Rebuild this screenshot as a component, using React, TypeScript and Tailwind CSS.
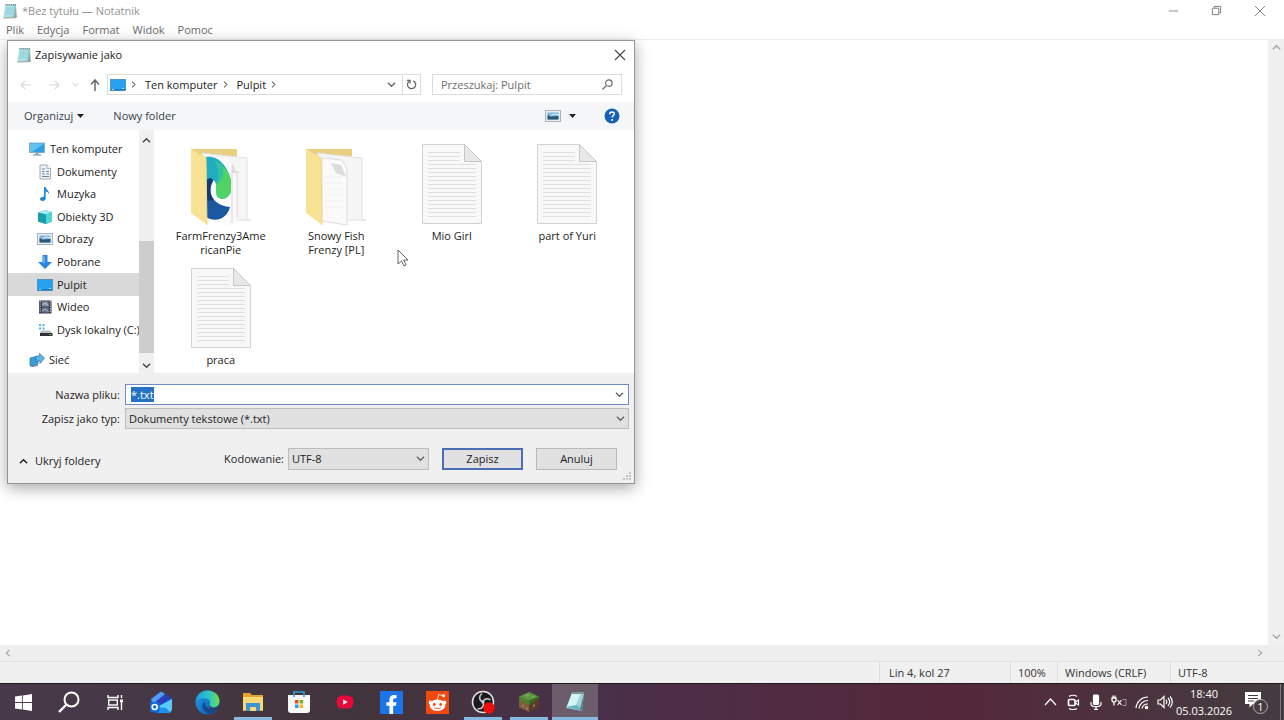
import { useEffect, useRef } from "react";
import type { ReactNode } from "react";
import clsx from "clsx";
import { FaFacebookF, FaRedditAlien } from "react-icons/fa";

function Chevron({ dir, className, size = 9 }: { dir: "up" | "down" | "left" | "right"; className?: string; size?: number }) {
  const d = {
    up: "M1 7 5 3l4 4",
    down: "M1 3l4 4 4-4",
    left: "M7 1 3 5l4 4",
    right: "M3 1l4 4-4 4",
  }[dir];
  return (
    <svg viewBox="0 0 10 10" width={size} height={size} className={clsx("shrink-0", className)} fill="none" stroke="currentColor" strokeWidth="1.5" aria-hidden="true">
      <path d={d} />
    </svg>
  );
}

function NotepadIcon({ size = 16 }: { size?: number }) {
  return (
    <svg viewBox="0 0 16 16" width={size} height={size} className="shrink-0" aria-hidden="true">
      <path d="M3.500 1.500H14L13 14l-11.500.5z" fill="#8fcdd4" />
      <path d="M3.500 2.500H12l-1 11-9 .5z" fill="#b3e3e8" />
      <path d="M12 13.500 14 2l.8 12-1.800 1z" fill="#98a5a8" />
      <path d="M4 5h7.500M3.700 7h7.500M3.500 9H11M3.200 11h7.500" stroke="#79bfca" strokeWidth=".7" />
      <path d="M3.500 1.700h11" stroke="#6b8a8f" strokeWidth="1.400" strokeDasharray="1 .9" />
      <path d="M1.500 15l10.500-.3L14.500 14" stroke="#747f81" fill="none" strokeWidth=".8" />
    </svg>
  );
}

function MonitorIcon() {
  return (
    <svg viewBox="0 0 16 16" width="16" height="16" aria-hidden="true">
      <rect x=".5" y="2" width="15" height="9.500" fill="#2f9fe0" stroke="#7ba7bd" strokeWidth=".8" />
      <path d="M1 2.500h14L3 11H1z" fill="#62c1f0" />
      <path d="M6.500 12h3v1.500h-3z" fill="#8aa5b3" />
      <path d="M4 14h8" stroke="#6f9db5" strokeWidth="1.200" />
    </svg>
  );
}

function DesktopIcon() {
  return (
    <svg viewBox="0 0 16 14" width="16" height="14" aria-hidden="true">
      <rect x=".5" y="1.500" width="15" height="11" fill="#27a0ee" stroke="#3a8cc8" strokeWidth=".8" />
      <path d="M1 11.800h14" stroke="#1d6dab" strokeWidth="1" />
      <path d="M2 11.500h2M12 10.500h2" stroke="#b6e2ff" strokeWidth=".9" />
    </svg>
  );
}

function PictureIcon() {
  return (
    <svg viewBox="0 0 16 14" width="16" height="14" aria-hidden="true">
      <rect x=".5" y="1.500" width="15" height="11" fill="#e9edf0" stroke="#a3adb6" strokeWidth=".9" />
      <rect x="2.500" y="3.500" width="11" height="7" fill="#80b8dd" />
      <path d="M2.500 10.500V6l3 1.500 8-.5v3.500z" fill="#2b5876" />
      <path d="M6 6.500l4-1.500 3.500 1" stroke="#e6f5ff" fill="none" />
    </svg>
  );
}

const PLACE_ICONS: Record<string, ReactNode> = {
  docs: (
    <svg viewBox="0 0 16 16" width="16" height="16" aria-hidden="true">
      <path d="M3 1h7l3.500 3.500V15H3z" fill="#eef3f8" stroke="#93a2b2" strokeWidth=".9" />
      <path d="M10 1v3.500h3.500" fill="#fff" stroke="#93a2b2" strokeWidth=".8" />
      <path d="M5 5h3M5 7.500h2.500M9 7.500h3M5 10h3M9.500 10H12M5 12.500h7" stroke="#6682a4" />
    </svg>
  ),
  music: (
    <svg viewBox="0 0 16 16" width="16" height="16" aria-hidden="true">
      <path d="M7 1h1.700c.3 2.600 3.800 3.500 3.300 7.300-.6-1.800-1.700-2.500-3.300-2.800V12c0 1.800-1.300 3-3 3S3 14.200 3 13s1.300-2.300 4-2.200z" fill="#1e88d8" />
    </svg>
  ),
  cube: (
    <svg viewBox="0 0 16 16" width="16" height="16" aria-hidden="true">
      <path d="M1 3.500 8.500 1 15 3v9.500L9 15 1 12.500z" fill="#2fb9c4" />
      <path d="M1 3.500 8.500 1 15 3 9 5.500z" fill="#a5ecee" />
      <path d="M9 5.500 15 3v9.500L9 15z" fill="#4fd6d2" />
      <path d="M1 3.500l8 2V15l-8-2.500z" fill="#1a9cad" />
    </svg>
  ),
  download: (
    <svg viewBox="0 0 16 16" width="16" height="16" aria-hidden="true">
      <path d="M5.500 1h5v7H15l-7 7-7-7h4.500z" fill="#2a86dc" />
      <path d="M6.500 2h1.500v7H5z" fill="#5faef0" />
    </svg>
  ),
  video: (
    <svg viewBox="0 0 16 16" width="16" height="16" aria-hidden="true">
      <rect x="2" y="1.500" width="12.500" height="13" fill="#3b3f4d" />
      <path d="M3.200 2v12M13.300 2v12" stroke="#c5c9d2" strokeWidth="1.200" strokeDasharray="1.200 1.200" />
      <rect x="5" y="2.500" width="6.500" height="5" fill="#7d8cb5" />
      <rect x="5" y="8.500" width="6.500" height="5" fill="#5f719f" />
      <path d="M5 6l3-2 3.500 2.500M5 12l3-2 3.500 2.500" stroke="#d6c98a" fill="none" strokeWidth=".9" />
    </svg>
  ),
  disk: (
    <svg viewBox="0 0 16 16" width="16" height="16" aria-hidden="true">
      <path d="M2 2h2v2H2zM5.500 2h2v2h-2zM2 5.500h2v2H2zM5.500 5.500h2v2h-2z" fill="#4bb4ea" />
      <path d="M4 8.500h9l2 2.500H3z" fill="#b9bfc2" />
      <path d="M3 11h12.500v3H3z" fill="#2f3335" />
      <path d="M12.500 12.500h1.500" stroke="#69e06a" />
    </svg>
  ),
  network: (
    <svg viewBox="0 0 16 16" width="16" height="16" aria-hidden="true">
      <path d="M1 6l8-2v8l-7 2.500-1-1z" fill="#3d9bd6" stroke="#2b78ae" strokeWidth=".7" />
      <path d="M7 4.500 10.500 4V1.500L15.500 6 11 11.500V9L7 9.500z" fill="#5db5e8" stroke="#2b78ae" strokeWidth=".7" />
      <path d="M3 14.500l6-1" stroke="#5f7c8d" />
    </svg>
  ),
};

const PLACES: { label: string; icon: ReactNode; root?: boolean; selected?: boolean }[] = [
  { label: "Ten komputer", icon: <MonitorIcon />, root: true },
  { label: "Dokumenty", icon: PLACE_ICONS.docs },
  { label: "Muzyka", icon: PLACE_ICONS.music },
  { label: "Obiekty 3D", icon: PLACE_ICONS.cube },
  { label: "Obrazy", icon: <PictureIcon /> },
  { label: "Pobrane", icon: PLACE_ICONS.download },
  { label: "Pulpit", icon: <DesktopIcon />, selected: true },
  { label: "Wideo", icon: PLACE_ICONS.video },
  { label: "Dysk lokalny (C:)", icon: PLACE_ICONS.disk },
];

function TextFileIcon() {
  return (
    <svg viewBox="0 0 62 82" width="62" height="82" aria-hidden="true">
      <path d="M1.500 1.500h42l17 17v62h-59z" fill="#f8f8f8" stroke="#d2d2d2" />
      <path d="M43.500 1.500v17h17z" fill="#e8e8e8" stroke="#c6c6c6" />
      <path d="M7 9.500h32M7 13.500h32M7 17.500h32M7 21.500h48M7 25.500h48M7 29.500h48M7 33.500h48M7 37.500h48M7 41.500h48M7 45.500h48M7 49.500h48M7 53.500h48M7 57.500h48M7 61.500h48M7 65.500h48M7 69.500h48M7 73.500h48" stroke="#e0e0e0" />
    </svg>
  );
}

function FolderIcon({ edge = false }: { edge?: boolean }) {
  return (
    <svg viewBox="0 0 62 82" width="62" height="82" aria-hidden="true">
      <path d="M1 6h46v10L16 20z" fill="#e8d080" />
      <path d="M12 10l45 5v62H20z" fill="#f5f5f5" stroke="#e0e0e0" />
      <path d="M57 77h4" stroke="#d0d0d0" />
      {edge ? (
        <>
          <path d="M16 13l22 3 9 14v50l-5 3-26-6z" fill="#fafafa" />
          <path d="M42 20l5 10h-5z" fill="#e0e0e0" />
          <path d="M42 29h7M42 22v58M47 30v44" stroke="#dcd2d4" fill="none" />
          <path d="M16 14c12-2 22 9 25 24v10c-2 8-10 10-14 5-1-3 0-7-1-12-2-6-7-5-10-1z" fill="#20adc0" />
          <path d="M24 17c9 3 16 12 17 22v9c-2 8-10 10-14 5-1-3 0-7-1-12 4-7 3-16-2-24z" fill="#33c3a2" />
          <path d="M33 24c5 4 8 10 8 16v8c-2 8-10 10-14 5-1-3 0-7-1-12 6-2 9-9 7-17z" fill="#4fd463" />
          <path d="M16 38c3-4 7-3 7 0-6 10-2 24 17 26-3 12-15 16-24 10z" fill="#1c58a0" />
          <path d="M16 38c3-4 7-3 7 0-4 7-3 14 1 19l-8 1z" fill="#123c78" />
        </>
      ) : (
        <>
          <path d="M17 15l20 2 5 9v56l-25-4z" fill="#fafafa" stroke="#dddddd" />
          <path d="M26 20l10 2 5 12-10-4z" fill="#dcdcdc" />
          <path d="M20 34h17M20 40h18M20 46h18M20 52h18M20 58h18M20 64h18" stroke="#f0f0f0" />
        </>
      )}
      <path d="M1 6l15 9 1 67L1 70z" fill="#f8e294" />
      <path d="M1 6l15 9 1 67" fill="none" stroke="#efd88a" />
    </svg>
  );
}

const FILES = [
  { name: ["FarmFrenzy3Ame", "ricanPie"], icon: <FolderIcon edge /> },
  { name: ["Snowy Fish", "Frenzy [PL]"], icon: <FolderIcon /> },
  { name: ["Mio Girl"], icon: <TextFileIcon /> },
  { name: ["part of Yuri"], icon: <TextFileIcon /> },
  { name: ["praca"], icon: <TextFileIcon /> },
];

function Caret() {
  return (
    <svg viewBox="0 0 7 4" width="7" height="4" aria-hidden="true">
      <path d="M0 0h7L3.500 4z" fill="#222" />
    </svg>
  );
}

function AddressRow() {
  return (
    <div className="flex h-[21px] items-center px-3 text-[#222]">
      <button aria-label="Wstecz" className="w-3 text-[#d8d8d8]">
        <svg viewBox="0 0 12 12" width="12" height="12" fill="none" stroke="currentColor" strokeWidth="1.200"><path d="M11 6H1M5 2 1 6l4 4" /></svg>
      </button>
      <button aria-label="Dalej" className="ml-4 w-3 text-[#d8d8d8]">
        <svg viewBox="0 0 12 12" width="12" height="12" fill="none" stroke="currentColor" strokeWidth="1.200"><path d="M1 6h10M7 2l4 4-4 4" /></svg>
      </button>
      <button aria-label="Ostatnie" className="ml-3 text-[#dcdcdc]"><Chevron dir="down" size={7} /></button>
      <button aria-label="W górę" className="ml-2.5 w-3">
        <svg viewBox="0 0 12 12" width="12" height="12" fill="none" stroke="#666" strokeWidth="1.500"><path d="M6 12V1M2 5.500 6 1l4 4.500" /></svg>
      </button>
      <div className="ml-1.5 flex h-full flex-1 items-center border border-[#dcdcdc] pl-[2px]">
        <DesktopIcon />
        <Chevron dir="right" size={7} className="ml-1 text-[#666]" />
        <button className="ml-2">Ten komputer</button>
        <Chevron dir="right" size={7} className="ml-1 text-[#666]" />
        <button className="ml-2">Pulpit</button>
        <Chevron dir="right" size={7} className="ml-1 text-[#666]" />
        <button aria-label="Poprzednie lokalizacje" className="ml-auto pr-1.5 text-[#666]"><Chevron dir="down" /></button>
        <button aria-label="Odśwież" className="flex h-full w-[18px] items-center justify-center border-l border-[#dcdcdc]">
          <svg viewBox="0 0 12 12" width="11" height="11" fill="none" stroke="#666" strokeWidth="1.400"><path d="M8 2A4.500 4.500 0 1 1 3.500 2.400M4.500 5V1.500H1" /></svg>
        </button>
      </div>
      <label className="ml-[11px] flex h-full w-[190px] items-center border border-[#dcdcdc] px-2">
        <input type="search" aria-label="Przeszukaj: Pulpit" placeholder="Przeszukaj: Pulpit" className="min-w-0 flex-1 outline-none placeholder:text-[#6d6d6d]" />
        <svg viewBox="0 0 12 12" width="11" height="11" fill="none" stroke="#666" strokeWidth="1.300"><circle cx="7.500" cy="4.500" r="3.500" /><path d="M5 7 .5 11.500" /></svg>
      </label>
    </div>
  );
}

function SaveDialog() {
  const nameRef = useRef<HTMLInputElement>(null);

  useEffect(() => {
    nameRef.current?.focus();
    nameRef.current?.select();
  }, []);

  return (
    <div role="dialog" aria-label="Zapisywanie jako" className="absolute top-10 left-[7px] flex w-[628px] max-w-full flex-col border border-[#959595] bg-white text-[#1c1c1c] shadow-[0_4px_14px_rgba(0,0,0,0.35)]">
      <div className="flex h-7 items-center px-2">
        <NotepadIcon />
        <span className="ml-[3px] flex-1">Zapisywanie jako</span>
        <button aria-label="Zamknij">
          <svg viewBox="0 0 12 12" width="12" height="12" stroke="#444" strokeWidth="1.100"><path d="M1 1l10 10M11 1 1 11" /></svg>
        </button>
      </div>
      <div className="pt-[5px] pb-[7px]"><AddressRow /></div>

      <div className="flex h-7 items-center bg-[#f5f6f7] pr-3.5 pl-4 text-[#35424f]">
        <button className="flex items-center gap-1">Organizuj <Caret /></button>
        <button className="ml-[29px]">Nowy folder</button>
        <button aria-label="Widok" className="ml-auto flex items-center gap-2"><PictureIcon /><Caret /></button>
        <button aria-label="Pomoc" className="ml-7">
          <svg viewBox="0 0 16 16" width="16" height="16">
            <circle cx="8" cy="8" r="7.500" fill="#1261b5" />
            <path d="M5.700 6.200C5.800 3 10.500 3.300 10.300 6c-.1 1.500-2.200 1.700-2.200 3.500" fill="none" stroke="#fff" strokeWidth="1.500" />
            <circle cx="8.100" cy="12" r="1" fill="#fff" />
          </svg>
        </button>
      </div>

      <div className="flex h-[243px]">
        <nav className="w-[131px] overflow-hidden pt-2">
          <ul className="mr-px grid h-[203px] auto-rows-fr">
            {PLACES.map((p) => (
              <li key={p.label} className={clsx("flex", p.selected && "bg-[#d9d9d9]")}>
                <button className={clsx("flex items-center whitespace-nowrap", p.root ? "gap-[5px] pl-[21px]" : "gap-1 pl-[29px]")}>
                  {p.icon}
                  {p.label}
                </button>
              </li>
            ))}
          </ul>
          <button className="mt-2 flex h-[22px] items-center gap-1 pl-[21px]">{PLACE_ICONS.network}Sieć</button>
        </nav>
        <div className="flex w-[15px] flex-col items-center bg-[#f0f0f0] text-[#444]">
          <button aria-label="Przewiń w górę" className="flex h-5 items-center"><Chevron dir="up" /></button>
          <div className="flex-90" />
          <div className="w-full flex-111 bg-[#cdcdcd]" />
          <button aria-label="Przewiń w dół" className="flex h-5 items-center pt-1"><Chevron dir="down" /></button>
        </div>
        <ul className="grid flex-1 grid-cols-4 content-start gap-y-[10px] px-[9px] pt-[13px] text-center leading-[14px]">
          {FILES.map((f) => (
            <li key={f.name[0]} className="flex flex-col items-center">
              {f.icon}
              <span className="mt-1">
                {f.name.map((line) => (
                  <span key={line} className="block">{line}</span>
                ))}
              </span>
            </li>
          ))}
        </ul>
      </div>

      <div className="bg-[#f0f0f0] pt-[11px] pb-[13px]">
        <div className="grid grid-cols-[112px_1fr] items-center gap-x-[5px] gap-y-[3px] pr-[5px]">
          <label htmlFor="file-name" className="text-right">Nazwa pliku:</label>
          <div className="flex h-[21px] items-center border border-[#6d8cc4] bg-white pr-1 pl-[5px]">
            <input id="file-name" ref={nameRef} defaultValue="*.txt" className="h-[15px] min-w-0 flex-1 outline-none selection:bg-[#2372c4] selection:text-white" />
            <button aria-label="Pokaż listę" className="text-[#666]"><Chevron dir="down" /></button>
          </div>
          <label htmlFor="file-type" className="text-right">Zapisz jako typ:</label>
          <div className="relative text-[#666]">
            <select id="file-type" className="block h-[21px] w-full appearance-none border border-[#bdbdbd] bg-[#e1e1e1] pl-[3px] text-[#1c1c1c]">
              <option>Dokumenty tekstowe (*.txt)</option>
            </select>
            <Chevron dir="down" className="pointer-events-none absolute top-1.5 right-1" />
          </div>
        </div>
        <div className="mt-[19px] flex items-center pr-[17px]">
          <button className="mt-1 flex items-center gap-[7px] pl-[11px]"><Chevron dir="up" />Ukryj foldery</button>
          <label htmlFor="encoding" className="ml-auto">Kodowanie:</label>
          <div className="relative ml-1 text-[#666]">
            <select id="encoding" className="block h-[22px] w-[141px] appearance-none border border-[#bdbdbd] bg-[#e1e1e1] pl-[3px] text-[#1c1c1c]">
              <option>UTF-8</option>
            </select>
            <Chevron dir="down" className="pointer-events-none absolute top-1.5 right-1" />
          </div>
          <button className="ml-[13px] h-[22px] w-[81px] border-2 border-[#4a6db5] bg-[#e1e1e1] leading-[14px]">Zapisz</button>
          <button className="ml-[13px] h-[22px] w-[81px] border border-[#b8b8b8] bg-[#e1e1e1]">Anuluj</button>
        </div>
      </div>
      <svg viewBox="0 0 9 9" width="9" height="9" className="absolute right-0.5 bottom-0.5" fill="#c4c4c4" aria-hidden="true">
        <path d="M6 0h2v2H6zM6 3h2v2H6zM6 6h2v2H6zM3 3h2v2H3zM3 6h2v2H3zM0 6h2v2H0z" />
      </svg>
    </div>
  );
}

const APPS: { name: string; icon: ReactNode; running?: boolean; active?: boolean }[] = [
  {
    name: "Start",
    icon: (
      <svg viewBox="0 0 16 16" width="17" height="17" fill="#fff"><path d="M0 2.300 6.500 1.400v6.200H0zM7.300 1.300 16 0v7.600H7.300zM0 8.400h6.500v6.200L0 13.700zM7.300 8.400H16V16l-8.700-1.300z" /></svg>
    ),
  },
  {
    name: "Wyszukaj",
    icon: (
      <svg viewBox="0 0 22 22" width="22" height="22" fill="none" stroke="#fff" strokeWidth="2"><circle cx="13.500" cy="8.500" r="7" /><path d="M8.500 13.500 1 21" strokeWidth="2.400" /></svg>
    ),
  },
  {
    name: "Widok zadań",
    icon: (
      <svg viewBox="0 0 17 17" width="17" height="17" fill="none" stroke="#fff" strokeWidth="1.400"><path d="M1 1v2.500h10V1M1 16v-2.500h10V16M14.500 1v3M14.500 8.500V16" /><rect x="1.700" y="6" width="8.600" height="5" /><path d="M13 5.500h3v3h-3z" fill="#fff" stroke="none" /></svg>
    ),
  },
  {
    name: "Outlook",
    icon: (
      <svg viewBox="0 0 24 24" width="24" height="24">
        <path d="M2 9 12 1.500 23 9v11l-2 3H5l-3-3z" fill="#1f4fd0" />
        <path d="M2 9 12 1.500l4 2.500L4 14z" fill="#4f9cf5" />
        <path d="M4 14 17 4l5 4-14 9z" fill="#2a3fb5" />
        <path d="M9 23 8 17 23 9v11l-2.500 3z" fill="#58cbf8" />
        <path d="M8 17l9 1 5 5H9z" fill="#1f90f0" />
        <rect x="1" y="12" width="9.500" height="10" rx="1.500" fill="#1268d4" />
        <circle cx="5.700" cy="17" r="2.500" fill="none" stroke="#fff" strokeWidth="1.600" />
      </svg>
    ),
  },
  {
    name: "Microsoft Edge",
    icon: (
      <svg viewBox="0 0 24 24" width="25" height="25">
        <defs>
          <linearGradient id="edge-top" x1="0" x2="1"><stop offset="0" stopColor="#1d9fe0" /><stop offset=".6" stopColor="#32c8c0" /><stop offset="1" stopColor="#6be04c" /></linearGradient>
          <linearGradient id="edge-low" x1="0" x2="1" y1="0" y2="1"><stop offset="0" stopColor="#1b9be4" /><stop offset="1" stopColor="#1359a8" /></linearGradient>
        </defs>
        <circle cx="12" cy="12" r="11.500" fill="url(#edge-low)" />
        <path d="M.6 11C1.500 4.500 6 .5 12 .5c7 0 11.500 5 11.500 10 0 4-3 6-6.500 6-2.500 0-3.500-1-3-2 1-1.500 1-6-4-6.500C5.500 7.500 1.500 9 .6 11z" fill="url(#edge-top)" />
        <path d="M9 11c-4 4-1 11 6 12 3-.5 6-3 7-5.500-4 2-12 1-12.500-4.500z" fill="#14488c" />
        <path d="M14 14.500c.8 2.300 3.500 3.200 6 2.700 1-.3 2-.7 3.500-2V18h-2c-4 1.500-9 .5-7.500-3.500z" fill="#43333f" />
      </svg>
    ),
  },
  {
    name: "Eksplorator plików",
    running: true,
    icon: (
      <svg viewBox="0 0 22 20" width="22" height="20">
        <path d="M1 1h7l2 2h11v4H1z" fill="#e3a52c" />
        <path d="M1 5h20v14H1z" fill="#f8d775" />
        <path d="M4 11h14v8h-4v-4H8v4H4z" fill="#3c93d8" />
        <path d="M1 18h3v1H1zM18 18h3v1h-3z" fill="#e0ae3c" />
      </svg>
    ),
  },
  {
    name: "Microsoft Store",
    icon: (
      <svg viewBox="0 0 24 24" width="24" height="24">
        <path d="M7 6V2h10v4" fill="none" stroke="#2c9fd8" strokeWidth="1.600" />
        <path d="M1 5h22v15a3 3 0 0 1-3 3H4a3 3 0 0 1-3-3z" fill="#f8f8f8" />
        <path d="M7 5v2M17 5v2" stroke="#2c9fd8" strokeWidth="1.600" />
        <path d="M8 10h3.500v3.500H8z" fill="#ee5022" /><path d="M12.600 10h3.500v3.500h-3.500z" fill="#7cb518" />
        <path d="M8 14.500h3.500V18H8z" fill="#20a3ea" /><path d="M12.600 14.500h3.500V18h-3.500z" fill="#fab414" />
      </svg>
    ),
  },
  {
    name: "YouTube",
    icon: (
      <svg viewBox="0 0 20 16" width="18" height="14"><rect x=".5" y=".5" width="19" height="15" rx="6" fill="#e60a3a" /><path d="M8 5l5 3-5 3z" fill="#fff" /></svg>
    ),
  },
  { name: "Facebook", icon: <span className="flex size-[23px] items-end justify-center bg-[#1b74e8] text-white"><FaFacebookF size={19} /></span> },
  { name: "Reddit", icon: <span className="flex size-[23px] items-center justify-center bg-[#f04a12] text-white"><FaRedditAlien size={19} /></span> },
  {
    name: "OBS Studio",
    running: true,
    icon: (
      <svg viewBox="0 0 24 24" width="24" height="24">
        <circle cx="12" cy="12" r="10.500" fill="#1b1b1e" stroke="#e4e4e4" strokeWidth="1.500" />
        <path d="M11 3.500C7.500 6 8 10.500 12 12M19.500 10c-3.500-2.500-7.300-.7-7.500 2M6.500 18.500c4 1.500 7-2.500 5.500-6.500" fill="none" stroke="#c9c9c9" strokeWidth="1.500" />
        <circle cx="12" cy="12" r="1.700" fill="#c9c9c9" />
        <circle cx="18" cy="18" r="5.700" fill="#ee0d0d" />
      </svg>
    ),
  },
  {
    name: "Minecraft",
    running: true,
    icon: (
      <svg viewBox="0 0 22 22" width="22" height="22">
        <path d="M11 1l10 4.500L11 10 1 5.500z" fill="#5c9440" />
        <path d="M1 5.500 11 10v11L1 16.500z" fill="#805a3c" /><path d="M21 5.500 11 10v11l10-4.500z" fill="#5a3b27" />
        <path d="M1 5.500 11 10v4l-2.500-2v1.500L6 12v-2L3.500 10v1L1 9z" fill="#4c842e" /><path d="M21 5.500 11 10v4l2.500-1v-2l2.500 1v-2.500l2.500.5V8L21 8z" fill="#3a6924" />
        <path d="M4 13l2 1v2l-2-1zM8 16l2 1v2l-2-1zM15 14l2-1v2l-2 1z" fill="#a47c59" />
        <path d="M7 4l3-1 2 1.500L9 6zM13 6l3-1 1 1-3 1z" fill="#79b253" />
      </svg>
    ),
  },
  {
    name: "Notatnik",
    running: true,
    active: true,
    icon: (
      <svg viewBox="0 0 22 22" width="22" height="22">
        <path d="M8 2h12l-2 18-16-3z" fill="#9ad3d9" /><path d="M8 2h9l-5 12-9 2z" fill="#d6f3f4" />
        <path d="M2 16l11-2 5 6z" fill="#68b3bc" /><path d="M8 1h12v2H7z" fill="#7c979b" /><path d="M20 3l-2 17-2-2z" fill="#56767c" />
      </svg>
    ),
  },
];

const TRAY: { name: string; icon: ReactNode }[] = [
  { name: "Pokaż ukryte ikony", icon: <path d="M3 11l5.500-6 5.500 6" /> },
  { name: "Rozmowa", icon: <><rect x="3.500" y="5.500" width="6.500" height="6" rx="1" strokeWidth="1.700" /><path d="M10.500 8l3-2v5l-3-2" /><path d="M4 2.500c2-1.700 6-1.700 8 0M4 14.500c2 1.500 6 1.500 8 0" /></> },
  { name: "Mikrofon", icon: <><rect x="5.500" y="1" width="5" height="9.500" rx="1" fill="#fff" /><path d="M3 8v2c0 3.500 10 3.500 10 0V8M8 13v2.500M6 15.300h4" /></> },
  { name: "Bateria", icon: <><path d="M1 4v2c0 2.800 4 2.800 4 0V4zM2 1.500V4M4 1.500V4M3 8v3.500" strokeWidth="1.300" /><path d="M6.500 6l4 5M10.500 6l-4 5" strokeWidth="1.200" /><path d="M11.500 5.500H15v6h-3.500" strokeWidth=".8" opacity=".6" /></> },
  { name: "Sieć Wi-Fi", icon: <><path d="M2 14A12 12 0 0 1 14 3M5 14.500A9 9 0 0 1 14 6.500M8 14.500a6 6 0 0 1 6-4.500" strokeWidth="1.200" /><circle cx="12.500" cy="13.500" r="1.200" fill="#fff" /></> },
  { name: "Głośność", icon: <><path d="M1 6h2.500L7 2.500v11L3.500 10H1z" /><path d="M9 6c1 1 1 3 0 4M11 4c2.200 2.200 2.200 5.800 0 8M13 2.500c3 3 3 8 0 11" /></> },
];

function Taskbar() {
  return (
    <footer className="flex h-[37px] shrink-0 items-stretch border-t border-[#1f181d] bg-linear-to-r from-[#493a4b] from-0% via-[#54273a] via-75% to-[#433c40] to-95% text-white">
      <div className="flex bg-linear-to-r from-[#493a4b] via-[#42343c] via-60% to-[#4a304a]">
        {APPS.map((a) => (
          <button
            key={a.name}
            aria-label={a.name}
            className={clsx("flex w-[46px] flex-col items-center", a.active && "bg-[#6b5d6a]")}
          >
            <span className="flex flex-1 items-center">{a.icon}</span>
            <span className={clsx("-mt-[3px] h-[3px]", a.active ? "w-full" : "w-[38px]", a.running && "bg-[#86b8e0]")} />
          </button>
        ))}
      </div>
      <div className="flex flex-1 items-center justify-end bg-linear-to-r from-[#4a304a] via-[#54273a] to-[#433c40]">
        {TRAY.map((t) => (
          <button key={t.name} aria-label={t.name} className="flex w-[23px] justify-center">
            <svg viewBox="0 0 16 16" width="16" height="16" fill="none" stroke="#fff" strokeWidth="1.200">{t.icon}</svg>
          </button>
        ))}
        <button className="w-14 text-center leading-[17px]">
          <span className="block">18:40</span>
          <span className="block">05.03.2026</span>
        </button>
        <button aria-label="Powiadomienia" className="relative mr-3 ml-3 flex h-6 w-6 items-start">
          <svg viewBox="0 0 18 18" width="18" height="18"><path d="M1 2h16v12H9l-3.500 3.500V14H1z" fill="#fff" /><path d="M4 5.500h10M4 8.500h10M4 11h6" stroke="#4a3b43" /></svg>
          <span className="absolute right-0 bottom-0 flex size-[15px] items-center justify-center rounded-full border border-[#b5adb2] bg-[#453b40]">1</span>
        </button>
        <span className="mr-[3px] h-full border-r border-[#81787d]" />
      </div>
    </footer>
  );
}

export default function App() {
  return (
    <div className="relative flex h-screen flex-col overflow-hidden bg-white font-['Open_Sans','Noto_Sans',sans-serif] text-[11px] leading-[16px] text-[#333]">
      <header className="flex h-[21px] shrink-0 items-center pr-[3px] pl-0.5 text-[#939393]">
        <NotepadIcon />
        <span className="ml-1 flex-1">*Bez tytułu — Notatnik</span>
        <button aria-label="Minimalizuj" className="flex w-[43px] justify-center">
          <svg viewBox="0 0 12 12" width="11" height="11" stroke="#888"><path d="M1 6.500h10" /></svg>
        </button>
        <button aria-label="Przywróć" className="flex w-[43px] justify-center">
          <svg viewBox="0 0 12 12" width="11" height="11" stroke="#777" fill="none"><path d="M1.500 3.500h7v7h-7zM3.500 3.500v-2h7v7h-2" /></svg>
        </button>
        <button aria-label="Zamknij okno" className="flex w-[43px] justify-center">
          <svg viewBox="0 0 12 12" width="12" height="12" stroke="#888"><path d="M1 1l10 10M11 1 1 11" /></svg>
        </button>
      </header>
      <nav className="flex h-[18px] shrink-0 items-center gap-[13px] px-1.5 text-[#6a6a6a]">
        {["Plik", "Edycja", "Format", "Widok", "Pomoc"].map((m) => (
          <button key={m}>{m}</button>
        ))}
      </nav>

      <main className="flex min-h-0 flex-1">
        <textarea aria-label="Edytor tekstu" className="flex-1 resize-none border-t border-[#eeeeee] outline-none" />
        <div className="flex w-4 flex-col items-center justify-between bg-[#f0f0f0] py-1 text-[#a6a6a6]">
          <Chevron dir="up" />
          <Chevron dir="down" />
        </div>
      </main>
      <div className="flex h-4 shrink-0 items-center justify-between bg-[#eeeeee] pr-5 pl-1 text-[#a6a6a6]">
        <Chevron dir="left" size={8} />
        <Chevron dir="right" size={8} />
      </div>
      <div className="flex h-[22px] shrink-0 items-center justify-end border-t border-[#e2e2e2] bg-[#f0f0f0]">
        <span className="flex h-full w-[131px] items-center border-l border-[#dddddd] pl-[9px]">Lin 4, kol 27</span>
        <span className="flex h-full w-[47px] items-center border-l border-[#dddddd] pl-[7px]">100%</span>
        <span className="flex h-full w-[113px] items-center border-l border-[#dddddd] pl-[7px]">Windows (CRLF)</span>
        <span className="flex h-full w-[114px] items-center border-l border-[#dddddd] pl-[7px]">UTF-8</span>
      </div>
      <Taskbar />

      <SaveDialog />

      <svg viewBox="0 0 12 18" width="12" height="18" className="absolute top-[249px] left-[397px]" aria-hidden="true">
        <path d="M1 1v14l3.500-3 2.500 5 2-1-2.300-5H11z" fill="#fff" stroke="#555" strokeWidth=".9" />
      </svg>
    </div>
  );
}
